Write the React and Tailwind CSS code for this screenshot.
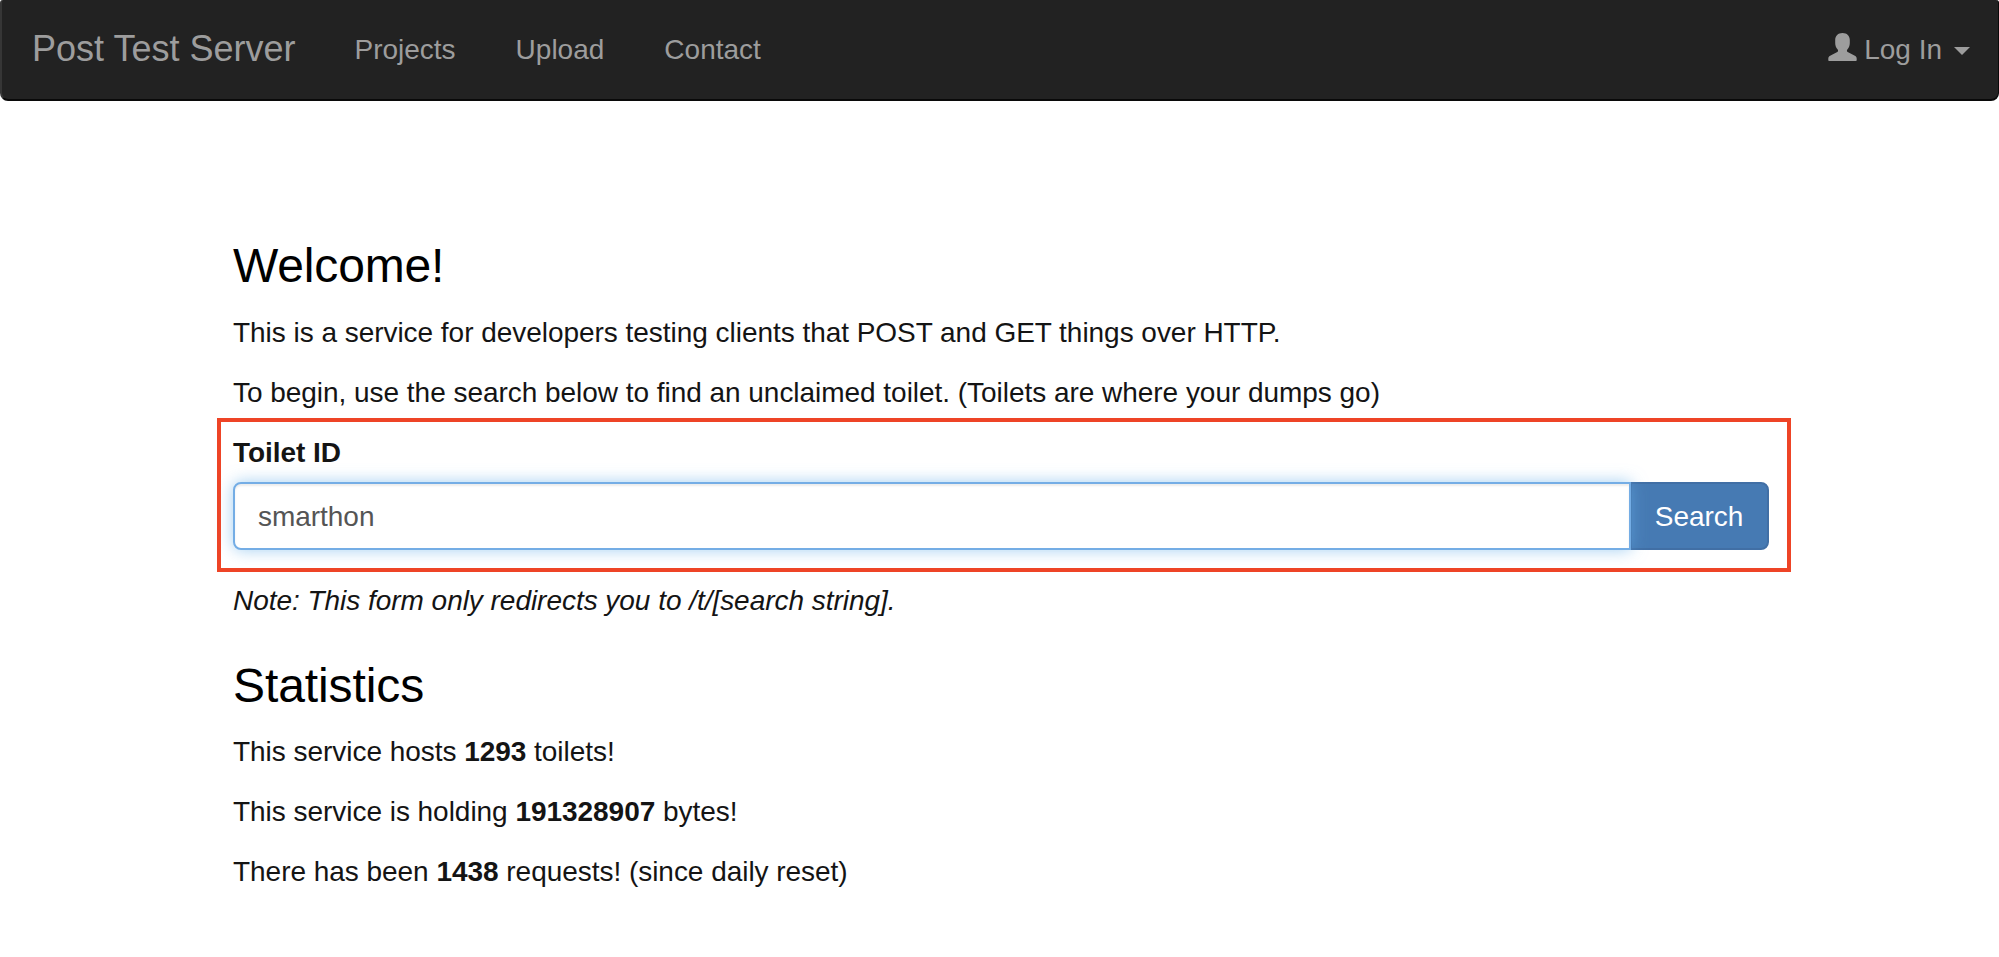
const navLinks = ["Projects", "Upload", "Contact"];

function UserIcon() {
  return (
    <svg className="h-7 w-[29px] shrink-0" viewBox="0 0 29 28" fill="currentColor" aria-hidden="true">
      <path d="M14.500 0C19 0 21.800 2.800 21.800 7v3c0 2.500-.8 4.600-2.300 6.200-.8.900-.8 2.200.2 2.700l7.200 3.900c1.200.7 1.800 1.700 1.800 3v1.200c0 .6-.4 1-1 1H1.300c-.6 0-1-.4-1-1v-1.200c0-1.300.6-2.300 1.800-3l7.200-3.900c1-.5 1-1.800.2-2.700C8 14.600 7.200 12.500 7.200 10V7c0-4.200 2.800-7 7.300-7Z" />
    </svg>
  );
}

function Navbar() {
  return (
    <nav className="flex h-[101px] items-start rounded-t-[3px] rounded-b-lg border-r border-b-2 border-l-2 border-r-[#090909] border-b-[#090909] border-l-[#363636] bg-[#222] pl-[30px] pr-7 text-[28px] leading-10 text-[#9d9d9d]">
      <a className="mt-[29px] text-[36px]">Post Test Server</a>
      <div className="mt-[30px] ml-[59px] flex gap-[60px]">
        {navLinks.map((label) => (
          <a key={label}>{label}</a>
        ))}
      </div>
      <a className="mt-[30px] ml-auto flex">
        <span className="mt-[3px]"><UserIcon /></span>
        <span className="ml-[7px]">Log In</span>
        <svg className="mt-[17px] ml-3 h-2 w-4" viewBox="0 0 16 8" fill="currentColor" aria-hidden="true">
          <path d="M0 0h16L8 8Z" />
        </svg>
      </a>
    </nav>
  );
}

export default function App() {
  return (
    <div className="h-[957px] overflow-hidden bg-white font-['Liberation_Sans',Arial,sans-serif] text-[28px] leading-10 text-[#141414]">
      <Navbar />
      <main className="ml-[233px] w-[1536px] pt-[138px] tracking-[-0.035px]">
        <h3 className="mb-[21px] text-[48px] leading-[53px] tracking-[-0.15px] text-black">Welcome!</h3>
        <p className="mb-5">This is a service for developers testing clients that POST and GET things over HTTP.</p>
        <p className="mb-[5px]">To begin, use the search below to find an unclaimed toilet. (Toilets are where your dumps go)</p>
        <form className="-ml-4 -mr-[22px] mb-[9px] h-[154px] border-4 border-[#ee4426] pt-[11px] pr-[18px] pl-3">
          <label className="mb-[9px] block font-bold">Toilet ID</label>
          <div className="flex h-[68px]">
            <div className="z-10 flex w-[1398px] items-center rounded-l-lg border-2 border-[#74ade5] bg-white px-[23px] pt-px text-[#555] shadow-[inset_0_2px_2px_rgba(0,0,0,0.075),0_0_16px_rgba(102,175,233,0.6)]">
              smarthon
            </div>
            <button type="button" className="-ml-px w-[139px] rounded-r-lg border-2 border-[#416fa5] bg-[#467ab3] pt-px pr-px text-white">Search</button>
          </div>
        </form>
        <p className="mb-[38px] italic">Note: This form only redirects you to /t/[search string].</p>
        <h3 className="mb-5 text-[48px] leading-[53px] tracking-[-0.1px] text-black">Statistics</h3>
        <p className="mb-5">This service hosts <b>1293</b> toilets!</p>
        <p className="mb-5">This service is holding <b>191328907</b> bytes!</p>
        <p>There has been <b>1438</b> requests! (since daily reset)</p>
      </main>
    </div>
  );
}
